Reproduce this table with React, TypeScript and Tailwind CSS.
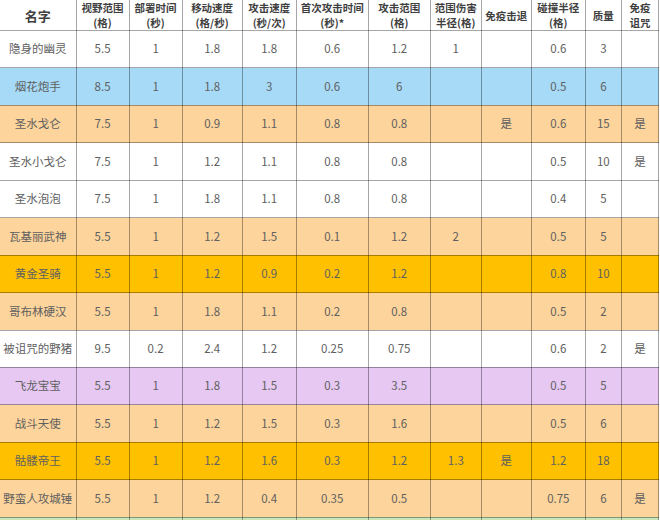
const cols = [76, 53, 53, 60, 54, 72, 62, 51, 50, 54, 36, 37]

const header = [
  ['名字'],
  ['视野范围', '(格)'],
  ['部署时间', '(秒)'],
  ['移动速度', '(格/秒)'],
  ['攻击速度', '(秒/次)'],
  ['首次攻击时间', '(秒)*'],
  ['攻击范围', '(格)'],
  ['范围伤害', '半径(格)'],
  ['免疫击退'],
  ['碰撞半径', '(格)'],
  ['质量'],
  ['免疫', '诅咒'],
]

type Row = { bg: string; cells: string[] }

const rows: Row[] = [
  { bg: 'bg-white', cells: ['隐身的幽灵', '5.5', '1', '1.8', '1.8', '0.6', '1.2', '1', '', '0.6', '3', ''] },
  { bg: 'bg-[#a6daf7]', cells: ['烟花炮手', '8.5', '1', '1.8', '3', '0.6', '6', '', '', '0.5', '6', ''] },
  { bg: 'bg-[#fdd49b]', cells: ['圣水戈仑', '7.5', '1', '0.9', '1.1', '0.8', '0.8', '', '是', '0.6', '15', '是'] },
  { bg: 'bg-white', cells: ['圣水小戈仑', '7.5', '1', '1.2', '1.1', '0.8', '0.8', '', '', '0.5', '10', '是'] },
  { bg: 'bg-white', cells: ['圣水泡泡', '7.5', '1', '1.8', '1.1', '0.8', '0.8', '', '', '0.4', '5', ''] },
  { bg: 'bg-[#fdd49b]', cells: ['瓦基丽武神', '5.5', '1', '1.2', '1.5', '0.1', '1.2', '2', '', '0.5', '5', ''] },
  { bg: 'bg-[#ffc000]', cells: ['黄金圣骑', '5.5', '1', '1.2', '0.9', '0.2', '1.2', '', '', '0.8', '10', ''] },
  { bg: 'bg-[#fdd49b]', cells: ['哥布林硬汉', '5.5', '1', '1.8', '1.1', '0.2', '0.8', '', '', '0.5', '2', ''] },
  { bg: 'bg-white', cells: ['被诅咒的野猪', '9.5', '0.2', '2.4', '1.2', '0.25', '0.75', '', '', '0.6', '2', '是'] },
  { bg: 'bg-[#e6c8f3]', cells: ['飞龙宝宝', '5.5', '1', '1.8', '1.5', '0.3', '3.5', '', '', '0.5', '5', ''] },
  { bg: 'bg-[#fdd49b]', cells: ['战斗天使', '5.5', '1', '1.2', '1.5', '0.3', '1.6', '', '', '0.5', '6', ''] },
  { bg: 'bg-[#ffc000]', cells: ['骷髅帝王', '5.5', '1', '1.2', '1.6', '0.3', '1.2', '1.3', '是', '1.2', '18', ''] },
  { bg: 'bg-[#fdd49b]', cells: ['野蛮人攻城锤', '5.5', '1', '1.2', '0.4', '0.35', '0.5', '', '', '0.75', '6', '是'] },
  { bg: 'bg-[#c9e6b8]', cells: ['', '', '', '', '', '', '', '', '', '', '', ''] },
]

export default function App() {
  return (
    <div className="h-[520px] w-[660px] overflow-hidden bg-white font-['Noto_Sans_CJK_SC','Noto_Sans',sans-serif]">
      <table className="w-[659px] table-fixed border-collapse text-center">
        <colgroup>
          {cols.map((w, i) => (
            <col key={i} style={{ width: w }} />
          ))}
        </colgroup>
        <thead>
          <tr className="h-[28px] bg-white">
            {header.map((lines, i) => (
              <th
                key={i}
                className={`border border-t-0 border-black/35 p-0 align-middle leading-[15px] font-bold text-[#3f3f3f] first:border-l-0 ${
                  i === 0 ? 'text-[13px]' : 'text-[10.5px]'
                }`}
              >
                {lines.map((l) => (
                  <div key={l} className="whitespace-nowrap">
                    {l}
                  </div>
                ))}
              </th>
            ))}
          </tr>
        </thead>
        <tbody>
          {rows.map((r, ri) => (
            <tr key={ri} className={`h-[37.45px] ${r.bg}`}>
              {r.cells.map((c, ci) => (
                <td
                  key={ci}
                  className="border border-black/35 p-0 align-middle text-[11.5px] leading-none whitespace-nowrap text-[#606060] first:border-l-0"
                >
                  {c}
                </td>
              ))}
            </tr>
          ))}
        </tbody>
      </table>
    </div>
  )
}
